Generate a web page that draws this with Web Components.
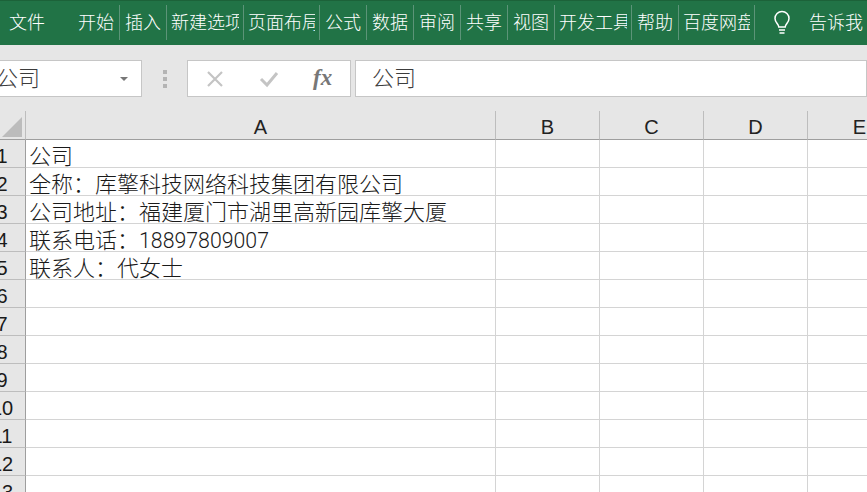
<!DOCTYPE html>
<html lang="zh"><head><meta charset="utf-8"><style>
html,body{margin:0;padding:0;height:100%;overflow:hidden;background:#e6e6e6}
body{width:867px;height:492px;font-family:"Noto Sans CJK SC","Liberation Sans",sans-serif}
</style></head><body>
<xl-app></xl-app>
<script>
const CJK='"Noto Sans CJK SC","Noto Sans CJK JP",sans-serif';
function def(name,css,html,init){
  customElements.define(name,class extends HTMLElement{
    constructor(){super();const s=this.attachShadow({mode:'open'});s.innerHTML=`<style>${css}</style>${html}`;}
    connectedCallback(){init&&init.call(this,this.shadowRoot)}
  });
}
def('xl-tab',`:host{display:block;box-sizing:border-box;height:35px;margin-top:4px;padding:0 3px 0 4px;overflow:hidden;white-space:nowrap;color:#fff;font:300 18px/32px ${CJK};border-right:1px solid #5c9478}
:host([plain]){border-right:none;padding-left:9px}
:host([clip]){padding-right:4px}
.c{display:block;overflow:hidden}`,`<span class="c"><slot></slot></span>`);
def('xl-ribbon',`:host{display:flex;height:45px;box-sizing:border-box;background:#217346;border-top:1px solid #1c6239;align-items:flex-start;overflow:hidden;flex:none}
svg{flex:none;margin:8px 0 0 17px}
.tell{flex:none;margin:4px 0 0 17px;color:#fff;font:300 18px/32px ${CJK};white-space:nowrap}`,
`<xl-tab plain style="width:74px">文件</xl-tab>
<xl-tab style="width:46px">开始</xl-tab><xl-tab style="width:47px;padding-left:5px">插入</xl-tab><xl-tab clip style="width:77px">新建选项</xl-tab><xl-tab clip style="width:76px">页面布局</xl-tab><xl-tab style="width:47px;padding-left:5px">公式</xl-tab><xl-tab style="width:47px;padding-left:5px">数据</xl-tab><xl-tab style="width:47px;padding-left:5px">审阅</xl-tab><xl-tab style="width:47px;padding-left:5px">共享</xl-tab><xl-tab style="width:47px;padding-left:5px">视图</xl-tab><xl-tab clip style="width:77px">开发工具</xl-tab><xl-tab style="width:47px;padding-left:5px">帮助</xl-tab><xl-tab clip style="width:76px">百度网盘</xl-tab>
<svg width="20" height="27" viewBox="0 0 20 26" fill="none" stroke="#fff" stroke-width="1.500"><path d="M6.800 17.500c0-3-3.800-4.400-3.800-8.600a7 7 0 0 1 14 0c0 4.200-3.800 5.600-3.800 8.600z"/><path d="M7 20.500h6M7.500 23.500h5" stroke-width="1.700"/></svg>
<span class="tell">告诉我</span>`);
def('xl-formula',`:host{display:flex;height:66px;box-sizing:border-box;padding:15px 0 14px;margin-left:-20px;background:#e6e6e6;flex:none;align-items:flex-start}
.box{box-sizing:border-box;background:#fff;border:1px solid #c6c6c6;height:37px;display:flex;align-items:center;color:#3c3c3c;font:300 22px/31px ${CJK}}
.name{width:162px;padding-left:18px;justify-content:space-between;padding-right:13px}
.name span{margin-left:-3px}
.tri{width:0;height:0;border:4px solid transparent;border-top:4px solid #777;margin-top:5px}
.grip{width:45px;height:37px;flex:none;display:flex;flex-direction:column;align-items:center;justify-content:center;gap:3px}
.grip i{width:4px;height:4px;background:#b4b4b4;display:block}
.fx{width:164px;flex:none;margin-right:4px;position:relative}
.fx svg{flex:none}
.f{font:italic 700 23px/33px "Liberation Serif",serif;color:#777;position:absolute;left:125px;top:0}
.val{flex:1;padding-left:16px}
.box>span:first-child,.val{padding-bottom:4px}`,
`<div class="box name"><span>公司</span><i class="tri"></i></div><div class="grip"><i></i><i></i><i></i></div>
<div class="box fx"><svg style="margin-left:18px" width="18" height="18" viewBox="0 0 18 18" stroke="#c4c4c4" stroke-width="2.200" fill="none"><path d="M2 2l14 14M16 2L2 16"/></svg><svg style="margin-left:35px" width="20" height="18" viewBox="0 0 20 18" stroke="#c4c4c4" stroke-width="3" fill="none"><path d="M2 9l6 6L18 3"/></svg><span class="f">fx</span></div>
<div class="box val">公司</div>`);
def('xl-sheet',`:host{display:grid;grid-template-columns:26px 470px 104px 104px 104px 104px;grid-template-rows:29px;grid-auto-rows:28px;overflow:hidden;flex:1;background:#fff}
.corner,.h,.n,.c{box-sizing:border-box;white-space:nowrap}
.corner{background:#e6e6e6;border-right:1px solid #bdbdbd;border-bottom:1px solid #9e9e9e;position:relative}
.corner svg{position:absolute;left:2px;top:6px}
.h{background:#e6e6e6;border-right:1px solid #bdbdbd;border-bottom:1px solid #9e9e9e;color:#222;text-align:center;font:20px/33px "Liberation Sans",sans-serif;height:29px;overflow:hidden}
.n{background:#e6e6e6;border-right:1px solid #9e9e9e;border-bottom:1px solid #bdbdbd;color:#1a1a1a;font:20px/32px "Liberation Sans",sans-serif;overflow:hidden;display:flex;justify-content:center}
.n span{flex:none;width:30px;margin-left:-21px;text-align:center}
.c{border-right:1px solid #d4d4d4;border-bottom:1px solid #d4d4d4;color:#1a1a1a;font:300 22px/28px ${CJK};padding-left:3px}
.d{font:300 21.300px/28px Roboto,"Liberation Sans",sans-serif}`,``,function(r){
  if(r.querySelector('.h'))return;
  const rows=['公司','全称：库擎科技网络科技集团有限公司','公司地址：福建厦门市湖里高新园库擎大厦','联系电话：<span class="d">18897809007</span>','联系人：代女士'];
  let h=`<div class="corner"><svg width="20" height="20" viewBox="0 0 20 20"><path d="M20 0v20H0z" fill="#bcbcbc"/></svg></div>`;
  'ABCDE'.split('').forEach(x=>h+=`<div class="h">${x}</div>`);
  for(let i=0;i<13;i++){h+=`<div class="n"><span>${i+1}</span></div><div class="c">${rows[i]||''}</div>`;for(let j=0;j<4;j++)h+='<div class="c"></div>';}
  r.innerHTML+=h;
});
def('xl-app',`:host{display:flex;flex-direction:column;width:867px;height:492px;overflow:hidden;background:#e6e6e6}`,`<xl-ribbon></xl-ribbon><xl-formula></xl-formula><xl-sheet></xl-sheet>`);
</script>
</body></html>
